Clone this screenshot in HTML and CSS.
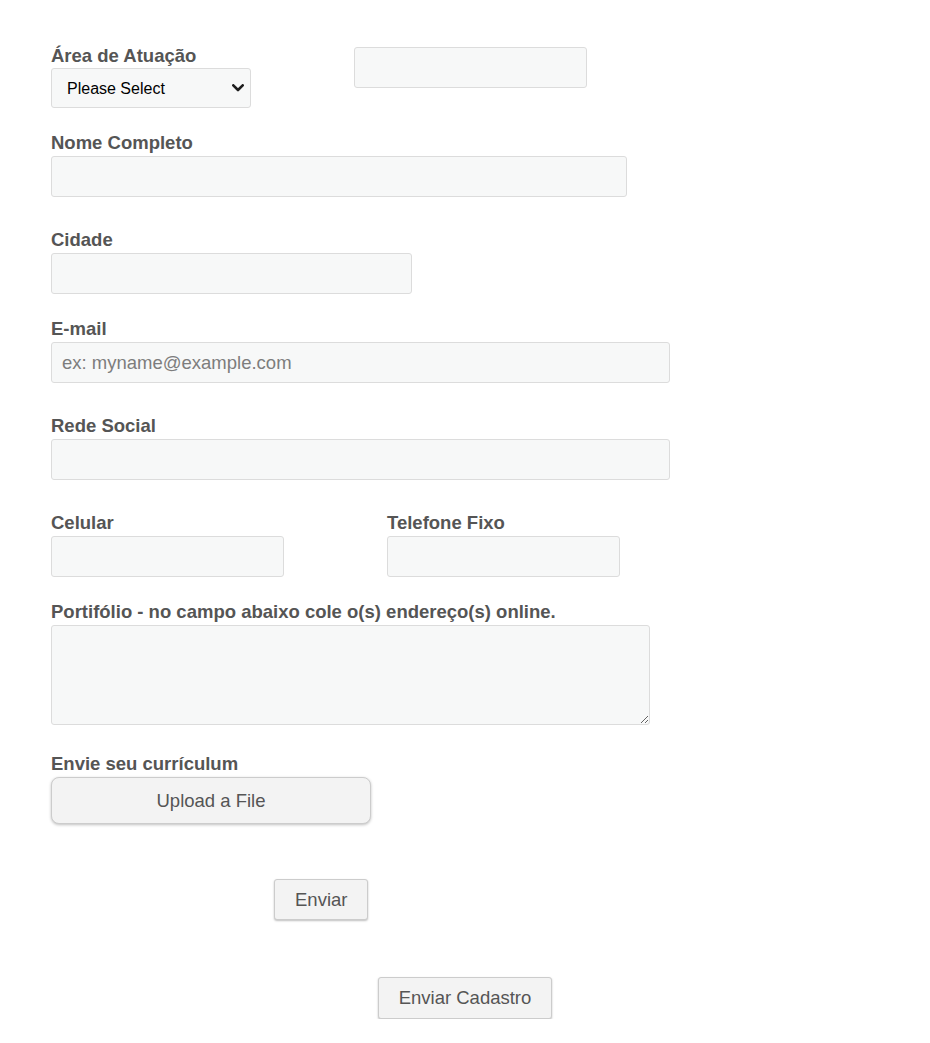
FILE: index.html
```html
<!DOCTYPE html>
<html lang="pt">
<head>
    <meta charset="UTF-8">
    <title>Cadastro</title>
    <link rel="stylesheet" href="styles.css">
</head>
<body>
    <form class="form-container">
        <div class="form-row row-top">
            <div class="field">
                <label class="field-label">Área de Atuação</label>
                <div class="select-wrap">
                    <select class="field-select">
                        <option>Please Select</option>
                    </select>
                    <svg class="select-arrow" width="12" height="8" viewBox="0 0 12 8">
                        <path d="M1.3 1.3 L6 6 L10.7 1.3" fill="none" stroke="#1e1e1e" stroke-width="2.6" stroke-linecap="round" stroke-linejoin="round"/>
                    </svg>
                </div>
            </div>
            <input type="text" class="field-input input-side">
        </div>

        <div class="form-row gap-24">
            <label class="field-label">Nome Completo</label>
            <input type="text" class="field-input input-name">
        </div>

        <div class="form-row gap-32">
            <label class="field-label">Cidade</label>
            <input type="text" class="field-input input-city">
        </div>

        <div class="form-row gap-24">
            <label class="field-label">E-mail</label>
            <input type="email" class="field-input input-wide" placeholder="ex: myname@example.com">
        </div>

        <div class="form-row gap-32">
            <label class="field-label">Rede Social</label>
            <input type="text" class="field-input input-wide">
        </div>

        <div class="form-row row-phones gap-32">
            <div class="field">
                <label class="field-label">Celular</label>
                <input type="text" class="field-input input-phone">
            </div>
            <div class="field">
                <label class="field-label">Telefone Fixo</label>
                <input type="text" class="field-input input-phone">
            </div>
        </div>

        <div class="form-row gap-24">
            <label class="field-label">Portifólio - no campo abaixo cole o(s) endereço(s) online.</label>
            <textarea class="field-textarea"></textarea>
        </div>

        <div class="form-row gap-28">
            <label class="field-label">Envie seu currículum</label>
            <button type="button" class="upload-button">Upload a File</button>
        </div>

        <div class="form-row row-send">
            <button type="button" class="form-button">Enviar</button>
        </div>
    </form>

    <div class="footer-row">
        <button type="button" class="form-button">Enviar Cadastro</button>
    </div>
</body>
</html>
```

FILE: styles.css
```css
* {
    margin: 0;
    padding: 0;
    box-sizing: border-box;
}

body {
    background-color: #ffffff;
    color: #555555;
    font-family: 'Liberation Sans', Arial, sans-serif;
    font-size: 16px;
}

.form-container {
    padding: 45px 0 0 51px;
}

.form-row {
    display: flex;
    flex-direction: column;
    align-items: flex-start;
}

.row-top {
    flex-direction: row;
    gap: 103px;
}

.row-phones {
    flex-direction: row;
    gap: 103px;
}

.gap-24 {
    margin-top: 24px;
}

.gap-28 {
    margin-top: 28px;
}

.gap-32 {
    margin-top: 32px;
}

.field {
    display: flex;
    flex-direction: column;
}

.field-label {
    display: block;
    font-size: 18.5px;
    font-weight: bold;
    line-height: 20px;
    color: #555555;
    padding-top: 1px;
    margin-bottom: 3px;
}

.row-top .field-label {
    margin-bottom: 2px;
}

.field-input,
.field-select,
.field-textarea {
    display: block;
    height: 41px;
    background-color: #f7f8f8;
    border: 1px solid #dcdcdc;
    border-radius: 3px;
    font-family: inherit;
    font-size: 18.5px;
    color: #333333;
    padding: 0 10px;
    outline: none;
}

.field-input::placeholder {
    color: #7d7d7d;
}

.select-wrap {
    position: relative;
    width: 200px;
}

.field-select {
    appearance: none;
    width: 200px;
    height: 40px;
    font-size: 16px;
    color: #000000;
    padding: 0 30px 0 15px;
}

.select-arrow {
    position: absolute;
    top: 16px;
    right: 7px;
    pointer-events: none;
}

.input-side {
    width: 233px;
    margin-top: 2px;
}

.input-name {
    width: 576px;
}

.input-city {
    width: 361px;
}

.input-wide {
    width: 619px;
}

.input-phone {
    width: 233px;
}

.field-textarea {
    width: 599px;
    height: 100px;
    padding: 8px 10px;
    resize: vertical;
}

.upload-button {
    width: 320px;
    height: 47px;
    background-color: #f3f3f3;
    border: 1px solid #cccccc;
    border-radius: 8px;
    box-shadow: 0 1px 3px rgba(0, 0, 0, 0.25);
    font-family: inherit;
    font-size: 18.5px;
    color: #555555;
}

.row-send {
    margin-top: 55px;
    padding-left: 223px;
}

.form-button {
    height: 41px;
    padding: 0 20px;
    background-color: #f3f3f3;
    border: 1px solid #cccccc;
    border-radius: 3px;
    box-shadow: 0 1px 2px rgba(0, 0, 0, 0.25);
    font-family: inherit;
    font-size: 18.5px;
    color: #555555;
}

.footer-row {
    display: flex;
    justify-content: center;
    margin-top: 57px;
}

.footer-row .form-button {
    height: 42px;
}
```
